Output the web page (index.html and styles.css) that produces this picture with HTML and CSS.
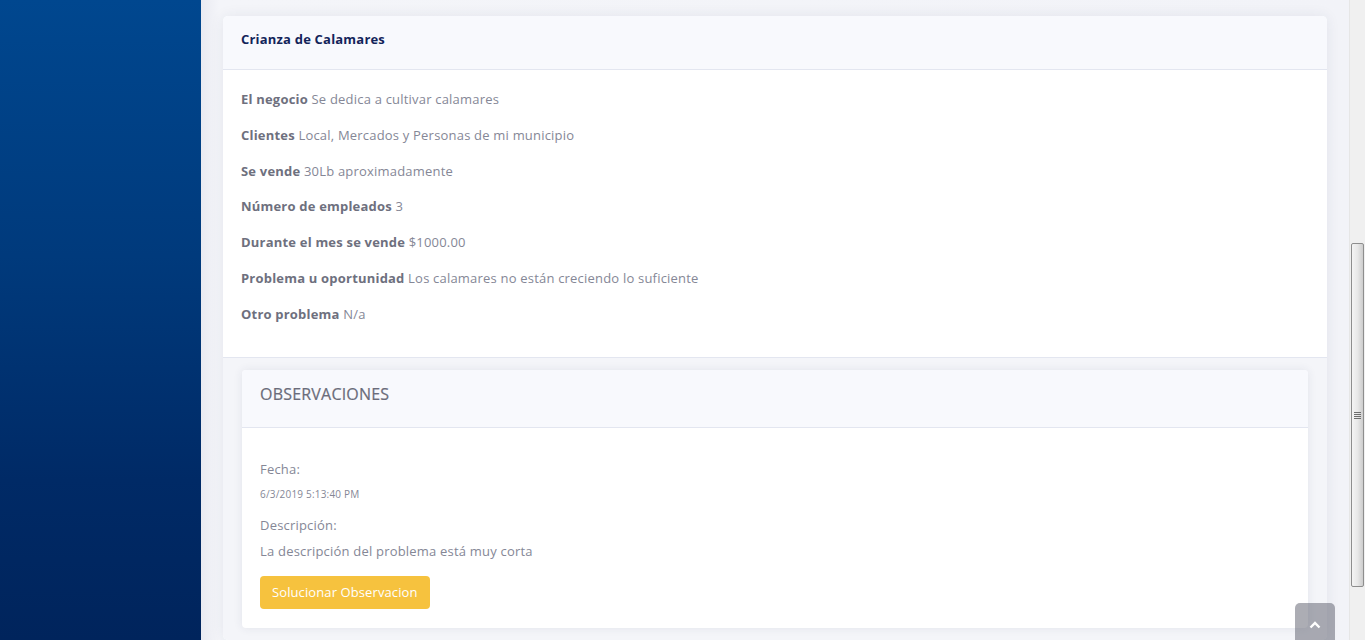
FILE: index.html
```html
<!DOCTYPE html>
<html lang="es">
<head>
<meta charset="utf-8">
<title>Crianza de Calamares</title>
<link rel="stylesheet" href="styles.css">
</head>
<body>
<aside class="sidebar"></aside>
<main class="content">
  <section class="card">
    <header class="card-header">
      <h6 class="card-title">Crianza de Calamares</h6>
    </header>
    <div class="card-body">
      <p class="info"><strong>El negocio</strong> Se dedica a cultivar calamares</p>
      <p class="info"><strong>Clientes</strong> Local, Mercados y Personas de mi municipio</p>
      <p class="info"><strong>Se vende</strong> 30Lb aproximadamente</p>
      <p class="info"><strong>Número de empleados</strong> 3</p>
      <p class="info"><strong>Durante el mes se vende</strong> $1000.00</p>
      <p class="info"><strong>Problema u oportunidad</strong> Los calamares no están creciendo lo suficiente</p>
      <p class="info"><strong>Otro problema</strong> N/a</p>
    </div>
    <div class="card-footer">
      <section class="card inner">
        <header class="card-header inner-header">
          <h5 class="obs-title">OBSERVACIONES</h5>
        </header>
        <div class="inner-body">
          <p class="label">Fecha:</p>
          <p class="date">6/3/2019 5:13:40 PM</p>
          <p class="label">Descripción:</p>
          <p class="desc">La descripción del problema está muy corta</p>
          <button class="btn-warning" type="button">Solucionar Observacion</button>
        </div>
      </section>
    </div>
  </section>
</main>
<div class="scrollbar">
  <div class="thumb"><span class="grip"></span></div>
</div>
<a class="scroll-top" href="#">
  <svg width="12" height="8" viewBox="0 0 12 8"><path d="M1.5 6.5 L6 2 L10.5 6.5" fill="none" stroke="#fff" stroke-width="2.4"/></svg>
</a>
</body>
</html>
```

FILE: styles.css
```css
html, body {
  margin: 0;
  padding: 0;
  height: 640px;
  overflow: hidden;
}
body {
  display: flex;
  font-family: "Open Sans", "DejaVu Sans", sans-serif;
  letter-spacing: 0.2px;
  background: #f1f2f7;
}
.sidebar {
  width: 201px;
  flex: 0 0 201px;
  background: linear-gradient(180deg, #00478f 0%, #003a7c 40%, #002a66 75%, #00245c 100%);
}
.content {
  flex: 1;
  padding: 16px 22px 0 22px;
  background: linear-gradient(90deg, #e9eaf1 0px, #f4f5f9 18px, #f2f3f8 100%);
  min-width: 0;
}
.card {
  background: #fff;
  border-radius: 5px;
  box-shadow: 0 0 14px rgba(40, 50, 90, 0.08);
  overflow: hidden;
}
.card-header {
  height: 54px;
  box-sizing: border-box;
  padding: 14px 18px 0;
  background: #f8f9fd;
  border-bottom: 1px solid #e3e6f0;
}
.card-title {
  margin: 0;
  font-size: 13px;
  line-height: 18px;
  font-weight: 700;
  color: #13245a;
}
.card-body {
  padding: 19px 18px 17px;
}
.info {
  margin: 0 0 15.8px;
  font-size: 13px;
  line-height: 20px;
  color: #858796;
}
.info strong {
  color: #6e707e;
  font-weight: 700;
}
.card-footer {
  background: #f4f5f9;
  border-top: 1px solid #e3e6f0;
  padding: 12px 19px 12px;
}
.inner {
  border-radius: 4px;
  box-shadow: 0 0 10px rgba(40, 50, 90, 0.09);
}
.inner-header {
  height: 58px;
  padding-top: 13px;
}
.obs-title {
  margin: 0;
  font-size: 16px;
  line-height: 22px;
  font-weight: 400;
  color: #6a6c7a;
  -webkit-text-stroke: 0.2px #6a6c7a;
}
.inner-body {
  padding: 31px 18px 19px;
  color: #858796;
}
.label {
  margin: 0;
  font-size: 13px;
  line-height: 20px;
}
.date {
  margin: 7px 0 13px;
  font-size: 10px;
  line-height: 16px;
}
.desc {
  margin: 6px 0 15px;
  font-size: 13px;
  line-height: 20px;
}
.btn-warning {
  display: block;
  height: 33px;
  padding: 0 12px;
  border: 0;
  border-radius: 4px;
  background: #f6c23e;
  color: #fff;
  font-family: inherit;
  letter-spacing: 0.1px;
  font-size: 13px;
}
.scrollbar {
  width: 16px;
  flex: 0 0 16px;
  background: #f0f0f0;
  border-left: 1px solid #e6e6e6;
  box-sizing: border-box;
  padding-top: 243px;
}
.thumb {
  margin-left: 1px;
  width: 13px;
  height: 344px;
  box-sizing: border-box;
  border: 1px solid #8e8e8e;
  border-radius: 2px;
  background: linear-gradient(90deg, #f4f4f4 0%, #e8e8e8 50%, #cdcdcd 100%);
  display: flex;
  align-items: center;
  justify-content: center;
}
.grip {
  width: 7px;
  height: 7px;
  background: repeating-linear-gradient(180deg, #6d6d6d 0 1px, transparent 1px 2px);
}
.scroll-top {
  position: fixed;
  left: 1295px;
  top: 603px;
  width: 40px;
  height: 44px;
  border-radius: 5px;
  background: rgba(90, 92, 105, 0.5);
  display: flex;
  justify-content: center;
  padding-top: 18px;
  box-sizing: border-box;
}
.scroll-top svg { display: block; }
```
